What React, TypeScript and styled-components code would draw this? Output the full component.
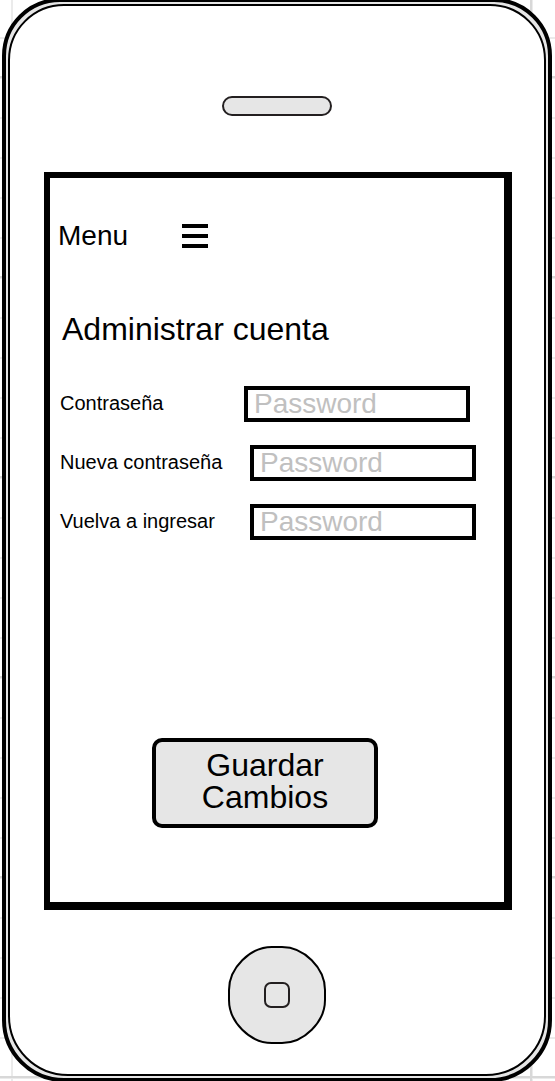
import React from "react";
import styled, { createGlobalStyle } from "styled-components";

const GlobalStyle = createGlobalStyle`
  *, *::before, *::after { box-sizing: border-box; }
  body {
    margin: 0;
    background: #fff;
    color: #000;
    font-family: "Liberation Sans", Arial, Helvetica, sans-serif;
  }
  button, input { font: inherit; color: inherit; margin: 0; }
`;

/* Drawing-board grid: minor lines every 40px, major lines every 200px */
const Board = styled.div`
  overflow: hidden;
  min-height: 100vh;
  background-color: #fff;
  background-image:
    linear-gradient(#d8d8d8 2px, transparent 2px),
    linear-gradient(90deg, #d8d8d8 2px, transparent 2px),
    linear-gradient(#ebebeb 2px, transparent 2px),
    linear-gradient(90deg, #ebebeb 2px, transparent 2px);
  background-size: 200px 200px, 200px 200px, 40px 40px, 40px 40px;
  background-position: 0 76px, 130px 0, 0 37px, 11px 0;
`;

const Phone = styled.main`
  margin: -2px 3px -1px 2px;
  padding: 2px;
  border: 4px solid #000;
  border-radius: 58px 58px 62px 62px;
  background: #e6e6e6;
`;

const Face = styled.div`
  display: flex;
  flex-direction: column;
  align-items: center;
  padding: 90px 0 30px;
  border: 2px solid #000;
  border-radius: 56px 56px 60px 60px;
  background: #fff;
`;

const Speaker = styled.div`
  width: 110px;
  height: 20px;
  border: 2px solid #231f20;
  border-radius: 10px;
  background: #e6e6e6;
`;

const Screen = styled.section`
  align-self: stretch;
  display: flex;
  flex-direction: column;
  margin: 56px 32px 36px 34px;
  padding: 42px 8px 74px;
  border: solid #000;
  border-width: 6px 8px 8px 6px;
`;

const Header = styled.header`
  display: flex;
  align-items: center;
  gap: 54px;
  font-size: 28px;
  line-height: 32px;
`;

const IconButton = styled.button`
  display: flex;
  padding: 0;
  border: 0;
  background: none;
  cursor: pointer;
`;

const Title = styled.h1`
  margin: 59px 4px 39px;
  font-size: 32px;
  line-height: 36px;
  font-weight: 400;
`;

const Form = styled.form`
  display: flex;
  flex-direction: column;
  align-items: flex-start;
`;

const Fields = styled.div`
  display: flex;
  flex-direction: column;
  gap: 23px;
  width: 100%;
  padding-left: 2px;
`;

const Row = styled.div`
  display: flex;
  align-items: center;
`;

const Label = styled.label<{ $width: number }>`
  flex: 0 0 ${(p) => p.$width}px;
  padding-bottom: 2px;
  font-size: 20px;
  line-height: 24px;
  white-space: nowrap;
`;

const PasswordInput = styled.input`
  flex: 0 1 226px;
  min-width: 0;
  height: 36px;
  padding: 0 6px;
  border: 4px solid #000;
  border-radius: 0;
  background: #fff;
  font-size: 28px;
  line-height: 28px;
  outline: none;

  &::placeholder {
    color: #c0c0c0;
    opacity: 1;
  }
`;

const SaveButton = styled.button`
  width: 226px;
  max-width: 100%;
  margin: 198px 0 0 94px;
  padding: 7px 16px 11px;
  border: 4px solid #000;
  border-radius: 10px;
  background: #e6e6e6;
  font-size: 32px;
  line-height: 32px;
  text-align: center;
  cursor: pointer;
`;

const fields = [
  { id: "current", label: "Contraseña", labelWidth: 184 },
  { id: "new", label: "Nueva contraseña", labelWidth: 190 },
  { id: "repeat", label: "Vuelva a ingresar", labelWidth: 190 },
];

export default function App() {
  return (
    <>
      <GlobalStyle />
      <Board>
        <Phone>
          <Face>
            <Speaker />
            <Screen>
              <Header>
                <span>Menu</span>
                <IconButton type="button" aria-label="Menu">
                  <svg width="26" height="24" viewBox="0 0 26 24" aria-hidden="true">
                    <path d="M0 0h26v4H0zM0 10h26v4H0zM0 20h26v4H0z" />
                  </svg>
                </IconButton>
              </Header>
              <Title>Administrar cuenta</Title>
              <Form onSubmit={(e) => e.preventDefault()}>
                <Fields>
                  {fields.map((f) => (
                    <Row key={f.id}>
                      <Label htmlFor={f.id} $width={f.labelWidth}>
                        {f.label}
                      </Label>
                      <PasswordInput id={f.id} type="password" placeholder="Password" />
                    </Row>
                  ))}
                </Fields>
                <SaveButton type="submit">Guardar Cambios</SaveButton>
              </Form>
            </Screen>
            <IconButton type="button" aria-label="Inicio">
              <svg width="98" height="98" viewBox="0 0 98 98" aria-hidden="true">
                <path
                  d="M44 1H54C76 1 97 22 97 44V54C97 76 76 97 54 97H44C22 97 1 76 1 54V44C1 22 22 1 44 1Z"
                  fill="#e6e6e6"
                  stroke="#000"
                  strokeWidth="2"
                />
                <rect x="37" y="37" width="24" height="24" rx="6" fill="none" stroke="#231f20" strokeWidth="2" />
              </svg>
            </IconButton>
          </Face>
        </Phone>
      </Board>
    </>
  );
}
